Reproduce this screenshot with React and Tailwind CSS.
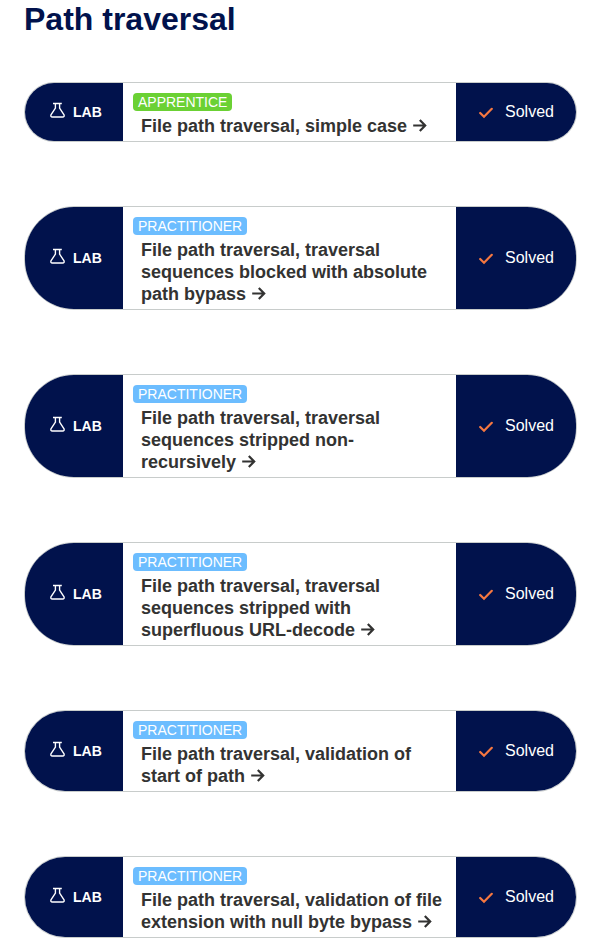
const labs = [
  { level: 'APPRENTICE', lines: ['File path traversal, simple case'] },
  {
    level: 'PRACTITIONER',
    lines: ['File path traversal, traversal', 'sequences blocked with absolute', 'path bypass'],
  },
  {
    level: 'PRACTITIONER',
    lines: ['File path traversal, traversal', 'sequences stripped non-', 'recursively'],
  },
  {
    level: 'PRACTITIONER',
    lines: ['File path traversal, traversal', 'sequences stripped with', 'superfluous URL-decode'],
  },
  { level: 'PRACTITIONER', lines: ['File path traversal, validation of', 'start of path'] },
  {
    level: 'PRACTITIONER',
    lines: ['File path traversal, validation of file', 'extension with null byte bypass'],
  },
];

function Flask() {
  return (
    <svg className="mb-1 h-4 w-[15px] shrink-0" viewBox="0 0 15 16" fill="none" stroke="white" strokeWidth="1.4">
      <path d="M3 1.5H11.8" />
      <path d="M5.4 1.5V6.2L1.1 12.6Q0.2 15 2.4 15H12.6Q14.8 15 13.9 12.6L9.6 6.2V1.5" strokeLinejoin="round" />
    </svg>
  );
}

function Check() {
  return (
    <svg className="mt-[2px] h-3 w-[14px] shrink-0" viewBox="0 0 14 12" fill="none" stroke="#f57740" strokeWidth="2.2">
      <path d="M1.2 6L5 9.8L12.8 1.8" strokeLinecap="round" />
    </svg>
  );
}

function Arrow() {
  return (
    <svg className="ml-[6px] inline-block h-[13px] w-[14px] align-[0px]" viewBox="0 0 14 13" fill="none" stroke="#333332" strokeWidth="2.2">
      <path d="M0.2 6.5H12M6.8 1L12.2 6.5L6.8 12" />
    </svg>
  );
}

function LabCard({ level, lines }) {
  return (
    <div className="flex overflow-hidden rounded-[50px] border border-[#c8cccb]">
      <div className="flex w-[98px] shrink-0 items-center gap-2 bg-[#01124c] pl-[25px] text-sm font-bold text-white">
        <Flask />
        <span>LAB</span>
      </div>
      <div className="flex flex-1 flex-col items-start gap-1 pt-2.5 pb-1 pl-2.5">
        <span
          className={`h-[18px] rounded-[4px] px-[5px] text-sm leading-[18px] text-white ${
            level === 'APPRENTICE' ? 'bg-[#6bd134]' : 'bg-[#6cbdff]'
          }`}
        >
          {level}
        </span>
        <a className="pl-2 text-lg leading-[22px] font-bold whitespace-nowrap text-[#333332]">
          {lines.map((line, i) => (
            <span key={line} className="block h-[22px]">
              {line}
              {i === lines.length - 1 && <Arrow />}
            </span>
          ))}
        </a>
      </div>
      <div className="flex w-[120px] shrink-0 items-center gap-3 bg-[#01124c] pl-[23px] text-base text-white">
        <Check />
        <span>Solved</span>
      </div>
    </div>
  );
}

export default function App() {
  return (
    <main className="h-[951px] overflow-hidden bg-white pr-[14px] pl-6 font-['Liberation_Sans',Arial,sans-serif]">
      <h1 className="mb-11 text-[32px] leading-[38px] font-bold text-[#01124c]">Path traversal</h1>
      <div className="flex flex-col gap-16">
        {labs.map((lab) => (
          <LabCard key={lab.lines.join(' ')} {...lab} />
        ))}
      </div>
    </main>
  );
}
